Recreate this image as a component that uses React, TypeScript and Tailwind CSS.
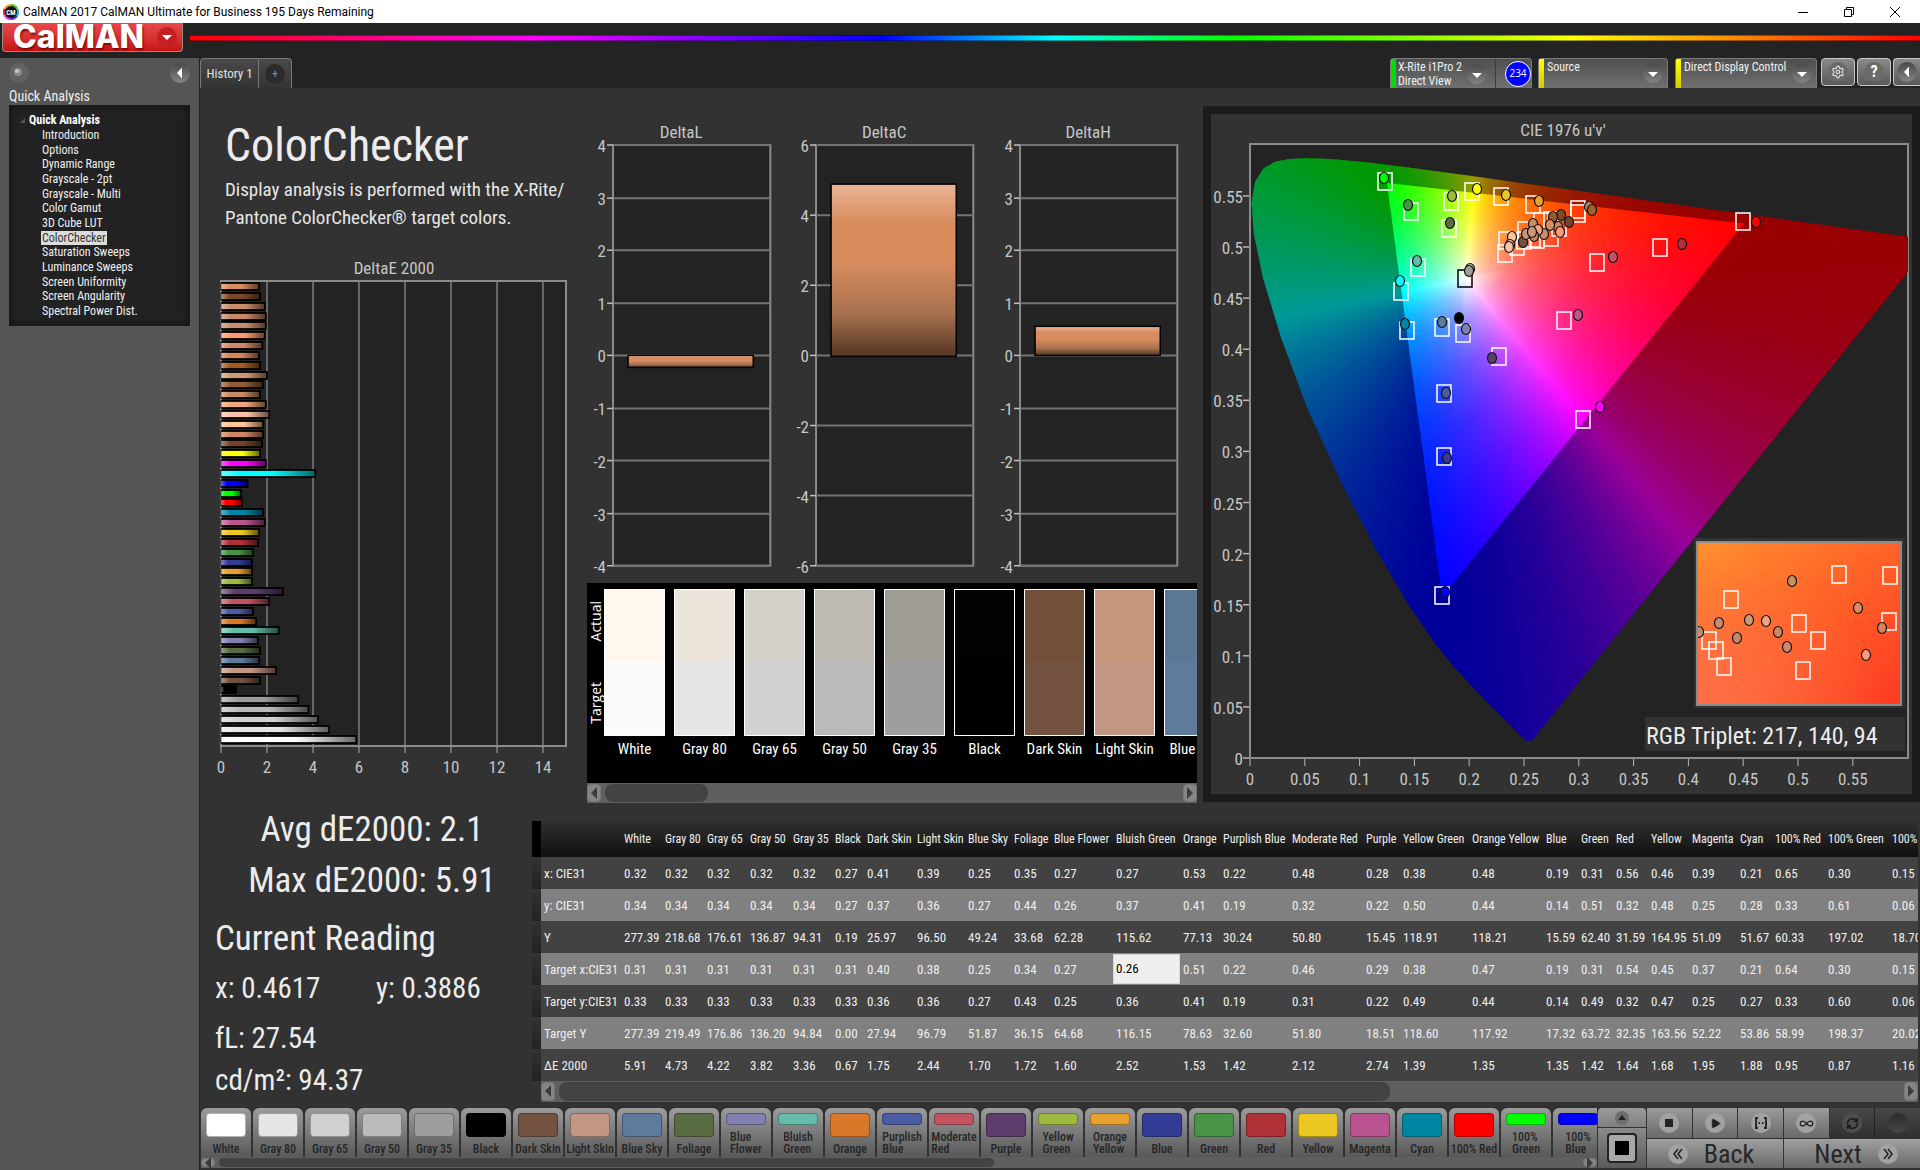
import React, { useState } from 'react';
import { Settings, Play, RefreshCw, Infinity as InfinityIcon } from 'lucide-react';

interface Patch {
  name: string;
  color: string;
  lines?: string[];
}

interface Mark {
  x: number;
  y: number;
  color: string;
}

const menuItems = [
  'Introduction',
  'Options',
  'Dynamic Range',
  'Grayscale - 2pt',
  'Grayscale - Multi',
  'Color Gamut',
  '3D Cube LUT',
  'ColorChecker',
  'Saturation Sweeps',
  'Luminance Sweeps',
  'Screen Uniformity',
  'Screen Angularity',
  'Spectral Power Dist.',
];

const patches: Patch[] = [
  { name: 'White', color: '#ffffff' },
  { name: 'Gray 80', color: '#e6e6e6' },
  { name: 'Gray 65', color: '#d1d1d1' },
  { name: 'Gray 50', color: '#bababa' },
  { name: 'Gray 35', color: '#9e9e9e' },
  { name: 'Black', color: '#000000' },
  { name: 'Dark Skin', color: '#735242' },
  { name: 'Light Skin', color: '#c29682' },
  { name: 'Blue Sky', color: '#5e7a9c' },
  { name: 'Foliage', color: '#596b42' },
  { name: 'Blue Flower', color: '#8280b0', lines: ['Blue', 'Flower'] },
  { name: 'Bluish Green', color: '#63bda8', lines: ['Bluish', 'Green'] },
  { name: 'Orange', color: '#d97829' },
  { name: 'Purplish Blue', color: '#4a5ca3', lines: ['Purplish', 'Blue'] },
  { name: 'Moderate Red', color: '#c25461', lines: ['Moderate', 'Red'] },
  { name: 'Purple', color: '#5c3d6b' },
  { name: 'Yellow Green', color: '#9eba40', lines: ['Yellow', 'Green'] },
  { name: 'Orange Yellow', color: '#e6a12e', lines: ['Orange', 'Yellow'] },
  { name: 'Blue', color: '#333d96' },
  { name: 'Green', color: '#479447' },
  { name: 'Red', color: '#b03038' },
  { name: 'Yellow', color: '#edc721' },
  { name: 'Magenta', color: '#ba5491' },
  { name: 'Cyan', color: '#0085a3' },
  { name: '100% Red', color: '#ff0000' },
  { name: '100% Green', color: '#00ff00', lines: ['100%', 'Green'] },
  { name: '100% Blue', color: '#0000ff', lines: ['100%', 'Blue'] },
];

// Measured colour on top, target colour below
const comparisons = [
  { name: 'White', actual: '#fff8ed', target: '#fafafa' },
  { name: 'Gray 80', actual: '#ece5dc', target: '#e6e6e6' },
  { name: 'Gray 65', actual: '#d5d1ca', target: '#d1d1d1' },
  { name: 'Gray 50', actual: '#beb9b3', target: '#bababa' },
  { name: 'Gray 35', actual: '#a09d95', target: '#9e9e9e' },
  { name: 'Black', actual: '#020204', target: '#000000' },
  { name: 'Dark Skin', actual: '#734f3a', target: '#735242' },
  { name: 'Light Skin', actual: '#c6957a', target: '#c29682' },
  { name: 'Blue Sky', actual: '#5d7894', target: '#5e7a9c' },
];

const columnWidths = [
  80, 41, 42, 43, 43, 42, 32, 50, 51, 46, 40, 62, 67, 40, 69, 74, 37, 69, 74, 35, 35, 35, 41, 48, 35, 53, 64, 60,
];

const tableRows = [
  { label: 'x: CIE31', values: '0.32 0.32 0.32 0.32 0.32 0.27 0.41 0.39 0.25 0.35 0.27 0.27 0.53 0.22 0.48 0.28 0.38 0.48 0.19 0.31 0.56 0.46 0.39 0.21 0.65 0.30 0.15' },
  { label: 'y: CIE31', values: '0.34 0.34 0.34 0.34 0.34 0.27 0.37 0.36 0.27 0.44 0.26 0.37 0.41 0.19 0.32 0.22 0.50 0.44 0.14 0.51 0.32 0.48 0.25 0.28 0.33 0.61 0.06' },
  { label: 'Y', values: '277.39 218.68 176.61 136.87 94.31 0.19 25.97 96.50 49.24 33.68 62.28 115.62 77.13 30.24 50.80 15.45 118.91 118.21 15.59 62.40 31.59 164.95 51.09 51.67 60.33 197.02 18.70' },
  { label: 'Target x:CIE31', values: '0.31 0.31 0.31 0.31 0.31 0.31 0.40 0.38 0.25 0.34 0.27 0.26 0.51 0.22 0.46 0.29 0.38 0.47 0.19 0.31 0.54 0.45 0.37 0.21 0.64 0.30 0.15' },
  { label: 'Target y:CIE31', values: '0.33 0.33 0.33 0.33 0.33 0.33 0.36 0.36 0.27 0.43 0.25 0.36 0.41 0.19 0.31 0.22 0.49 0.44 0.14 0.49 0.32 0.47 0.25 0.27 0.33 0.60 0.06' },
  { label: 'Target Y', values: '277.39 219.49 176.86 136.20 94.84 0.00 27.94 96.79 51.87 36.15 64.68 116.15 78.63 32.60 51.80 18.51 118.60 117.92 17.32 63.72 32.35 163.56 52.22 53.86 58.99 198.37 20.02' },
  { label: 'ΔE 2000', values: '5.91 4.73 4.22 3.82 3.36 0.67 1.75 2.44 1.70 1.72 1.60 2.52 1.53 1.42 2.12 2.74 1.39 1.35 1.35 1.42 1.64 1.68 1.95 1.88 0.95 0.87 1.16' },
];

const deltaE: [string, number][] = [
  ['#d98c5e', 1.65], ['#7a4a26', 1.7], ['#c98d6b', 1.9], ['#c68866', 1.95], ['#c48f6c', 1.95],
  ['#ff9973', 1.9], ['#d18769', 1.8], ['#d58559', 1.65], ['#a35a24', 1.7], ['#cf9874', 2.0],
  ['#935d33', 1.82], ['#c68f60', 1.7], ['#f0a67c', 1.95], ['#f7c2a5', 2.1], ['#fdc596', 1.83],
  ['#cc8863', 1.83], ['#73432b', 1.78], ['#ffff00', 1.7], ['#ff00ff', 1.95], ['#00ffff', 4.1],
  ['#0000ff', 1.16], ['#00ff00', 0.87], ['#ff0000', 0.92], ['#0085a3', 1.83], ['#ba5491', 1.9],
  ['#edc721', 1.66], ['#b03038', 1.62], ['#479447', 1.4], ['#333d96', 1.35], ['#e6a12e', 1.35],
  ['#9eba40', 1.35], ['#5c3d6b', 2.7], ['#c25461', 2.1], ['#4a5ca3', 1.4], ['#d97829', 1.53],
  ['#63bda8', 2.52], ['#8280b0', 1.6], ['#596b42', 1.7], ['#5e7a9c', 1.66], ['#c29682', 2.4],
  ['#735242', 1.7], ['#000000', 0.66], ['#9e9e9e', 3.36], ['#bababa', 3.8], ['#d1d1d1', 4.22],
  ['#e6e6e6', 4.7], ['#ffffff', 5.88],
];

const FONT = "font-['Liberation_Sans_Narrow','Roboto_Condensed','Open_Sans_Condensed','Lato',sans-serif]";

/* ---------- small pieces ---------- */

const ArrowDisc: React.FC<{ dir: 'down' | 'left' }> = ({ dir }) => (
  <svg width="20" height="20" viewBox="0 0 20 20" className="shrink-0" aria-hidden="true">
    <defs>
      <linearGradient id={`disc-${dir}`} x1="0" y1="0" x2="0" y2="1">
        <stop offset="0" stopColor="#484848" />
        <stop offset="1" stopColor="#848484" />
      </linearGradient>
    </defs>
    <circle cx="10" cy="10" r="10" fill={`url(#disc-${dir})`} />
    {dir === 'down' && <path d="M5 9h10l-5 5z" fill="#fff" />}
    {dir === 'left' && <path d="M12 4.500v11l-5-5.500z" fill="#fff" />}
  </svg>
);

const ScrollBar: React.FC<{ label: string; height: string; thumb: string }> = ({ label, height, thumb }) => (
  <div className={`flex items-center gap-1 bg-[#5f5f5f] ${height}`} role="group" aria-label={label}>
    <button aria-label="Scroll left" className="flex h-[calc(100%-2px)] w-3.5 items-center justify-center rounded-sm border border-[#757575] bg-[#858585]">
      <svg width="6" height="12" viewBox="0 0 6 12"><path d="M6 0v12L0 6z" fill="#3b3b3b" /></svg>
    </button>
    <div className="h-[calc(100%-2px)] flex-1">
      <div className={`h-full rounded-lg bg-[#434343] ${thumb}`} />
    </div>
    <button aria-label="Scroll right" className="flex h-[calc(100%-2px)] w-3.5 items-center justify-center rounded-sm border border-[#757575] bg-[#858585]">
      <svg width="6" height="12" viewBox="0 0 6 12"><path d="M0 0v12l6-6z" fill="#3b3b3b" /></svg>
    </button>
  </div>
);

/* ---------- charts ---------- */

const DeltaEChart: React.FC = () => {
  const left = 21;
  const top = 31;
  const bottom = 496;
  const unit = 23;
  return (
    <svg viewBox="0 0 387 535" className="w-full" role="img" aria-label="DeltaE 2000">
      <defs>
        <linearGradient id="barShade" x1="0" y1="0" x2="1" y2="0">
          <stop offset="0" stopColor="#fff" stopOpacity="0.4" />
          <stop offset="0.22" stopColor="#fff" stopOpacity="0" />
          <stop offset="0.55" stopColor="#000" stopOpacity="0" />
          <stop offset="1" stopColor="#000" stopOpacity="0.6" />
        </linearGradient>
      </defs>
      <text x="194" y="24" textAnchor="middle" fontSize="17" fill="#c6c6c6">DeltaE 2000</text>
      <rect x={left} y={top} width={unit * 15} height={bottom - top} fill="#232323" stroke="#8b8b8b" strokeWidth="2" />
      {[0, 2, 4, 6, 8, 10, 12, 14].map((t) => (
        <g key={t}>
          {t > 0 && <line x1={left + t * unit} x2={left + t * unit} y1={top} y2={bottom} stroke="#7f7f7f" strokeWidth="1.500" />}
          <line x1={left + t * unit} x2={left + t * unit} y1={bottom} y2={bottom + 7} stroke="#b0b0b0" />
          <text x={left + t * unit} y={bottom + 27} textAnchor="middle" fontSize="17" fill="#c6c6c6">{t}</text>
        </g>
      ))}
      {deltaE.map(([color, value], i) => {
        const y = Math.round(top + 2 + i * 9.84);
        return (
          <g key={i}>
            <rect x={left} y={y} width={value * unit} height="7" fill={color} stroke="#000" />
            <rect x={left} y={y} width={value * unit} height="7" fill="url(#barShade)" />
            <path d={`M${left} ${y}h${value * unit}v7h-${value * unit}`} fill="none" stroke="#000" strokeWidth="1.500" />
          </g>
        );
      })}
    </svg>
  );
};

const DeltaChart: React.FC<{ title: string; max: number; step: number; value: number }> = ({ title, max, step, value }) => {
  const top = 27;
  const bottom = 447;
  const zero = (top + bottom) / 2;
  const scale = (bottom - top) / (2 * max);
  const ticks: number[] = [];
  for (let t = max; t >= -max; t -= step) ticks.push(t);
  return (
    <svg viewBox="0 0 203 464" className="min-w-0 flex-1 overflow-visible" role="img" aria-label={title}>
      <defs>
        <linearGradient id={`fill-${title}`} x1="0" y1="0" x2="0" y2="1">
          <stop offset="0" stopColor="#e9b597" />
          <stop offset="0.22" stopColor="#d98c5e" />
          <stop offset="0.45" stopColor="#d98c5e" />
          <stop offset="0.75" stopColor="#a8714f" />
          <stop offset="1" stopColor="#533523" />
        </linearGradient>
      </defs>
      <text x="94" y="20" textAnchor="middle" fontSize="17" fill="#c6c6c6">{title}</text>
      <rect x="26" y={top} width="157" height={bottom - top} fill="#232323" stroke="#8b8b8b" strokeWidth="2" />
      {ticks.map((t) => {
        const y = Math.round(zero - t * scale);
        return (
          <g key={t}>
            <line x1="26" x2="183" y1={y} y2={y} stroke="#747474" strokeWidth="2" />
            <line x1="20" x2="26" y1={y} y2={y} stroke="#c0c0c0" strokeWidth="1.500" />
            <text x="19" y={y + 7} textAnchor="end" fontSize="17" fill="#c6c6c6">{t}</text>
          </g>
        );
      })}
      <rect
        x="41"
        y={Math.round(zero - Math.max(value, 0) * scale)}
        width="125"
        height={Math.round(Math.abs(value) * scale)}
        fill={`url(#fill-${title})`}
        stroke="#000"
        strokeWidth="1.500"
      />
    </svg>
  );
};

const ux = (u: number) => 39 + u * 1096;
const vy = (v: number) => 644 - v * 1022;

const WHITE = [0.1978, 0.4683];
const PRIMARIES = [[0.4507, 0.5229], [0.125, 0.5625], [0.1754, 0.1579]];

const LOCUS = [
  [0.2568, 0.0165], [0.2522, 0.0169], [0.2461, 0.0226], [0.2347, 0.035], [0.2161, 0.0549], [0.1877, 0.0871],
  [0.169, 0.1119], [0.1441, 0.151], [0.1147, 0.2044], [0.0828, 0.2708], [0.0521, 0.3427], [0.0282, 0.4117],
  [0.0119, 0.4698], [0.0035, 0.5131], [0.0014, 0.5432], [0.0046, 0.5638], [0.0123, 0.577], [0.0231, 0.5837],
  [0.036, 0.5861], [0.0501, 0.5868], [0.0643, 0.5865], [0.0792, 0.5856], [0.1127, 0.5821], [0.1531, 0.5766],
  [0.2026, 0.5694], [0.2623, 0.5604], [0.3315, 0.5501], [0.4035, 0.5393], [0.4691, 0.5296], [0.5203, 0.5219],
  [0.583, 0.5125], [0.6234, 0.5065],
];

// u'v' -> display RGB, scaled so that the strongest channel is full
const chromaToRgb = (u: number, v: number, dim: number, power: number) => {
  const X = (9 * u) / (4 * v);
  const Z = (12 - 3 * u - 20 * v) / (4 * v);
  const lin = [
    3.2406 * X - 1.5372 - 0.4986 * Z,
    -0.9689 * X + 1.8758 + 0.0415 * Z,
    0.0557 * X - 0.204 + 1.057 * Z,
  ].map((c) => Math.max(c, 0));
  const peak = Math.max(...lin);
  const [r, g, b] = lin.map((c) => Math.round(255 * dim * Math.pow(c / peak, power)));
  return `rgb(${r},${g},${b})`;
};

// Distance along a ray from the white point to the edge of the RGB triangle
const edgeDistance = (dx: number, dy: number) => {
  let best = 10;
  for (let i = 0; i < 3; i++) {
    const [ax, ay] = PRIMARIES[i];
    const [bx, by] = PRIMARIES[(i + 1) % 3];
    const ex = bx - ax;
    const ey = by - ay;
    const det = dx * ey - dy * ex;
    if (Math.abs(det) < 1e-9) continue;
    const t = ((ax - WHITE[0]) * ey - (ay - WHITE[1]) * ex) / det;
    const s = ((ax - WHITE[0]) * dy - (ay - WHITE[1]) * dx) / det;
    if (t > 0 && s >= -0.0001 && s <= 1.0001) best = Math.min(best, t);
  }
  return best;
};

const WEDGES = 240;
const wedges = Array.from({ length: WEDGES }, (_, i) => {
  const a0 = (i / WEDGES) * Math.PI * 2;
  const mid = a0 + Math.PI / WEDGES;
  const a1 = a0 + (Math.PI * 2.6) / WEDGES;
  const dx = Math.cos(mid);
  const dy = Math.sin(mid);
  const d = edgeDistance(dx, dy);
  const at = (a: number) => `${ux(WHITE[0] + Math.cos(a)).toFixed(1)},${vy(WHITE[1] + Math.sin(a)).toFixed(1)}`;
  return {
    points: `${ux(WHITE[0])},${vy(WHITE[1])} ${at(a0)} ${at(a1)}`,
    end: [ux(WHITE[0] + dx * d), vy(WHITE[1] + dy * d)],
    stops: [0, 0.15, 0.3, 0.5, 0.75, 1].map((t) => ({
      t,
      color: chromaToRgb(WHITE[0] + dx * d * t, WHITE[1] + dy * d * t, 1, 1.1),
    })),
    outer: chromaToRgb(WHITE[0] + dx * d, WHITE[1] + dy * d, 0.6, 1.6),
  };
});

const toPoints = (list: number[][]) => list.map(([u, v]) => `${ux(u).toFixed(1)},${vy(v).toFixed(1)}`).join(' ');

const targets = [
  [174, 67], [261, 77], [290, 82], [240, 87], [200, 97], [322, 90], [367, 95], [367, 99], [238, 114], [207, 153],
  [190, 177], [196, 216], [231, 213], [252, 219], [288, 242], [233, 279], [233, 342], [231, 481], [353, 206],
  [372, 305], [386, 148], [449, 133], [532, 107], [294, 139], [295, 126], [306, 132], [313, 126], [314, 116],
  [322, 124], [326, 125], [340, 123], [340, 106], [330, 107], [348, 113],
];

const readings: Mark[] = [
  { x: 173, y: 64, color: '#00ff00' }, { x: 197, y: 91, color: '#479447' }, { x: 241, y: 82, color: '#9eba40' },
  { x: 266, y: 75, color: '#ffff00' }, { x: 295, y: 81, color: '#edc721' }, { x: 328, y: 87, color: '#e6a12e' },
  { x: 239, y: 109, color: '#596b42' }, { x: 206, y: 147, color: '#63bda8' }, { x: 189, y: 167, color: '#00ffff' },
  { x: 194, y: 210, color: '#0085a3' }, { x: 231, y: 208, color: '#5e7a9c' }, { x: 248, y: 204, color: '#000000' },
  { x: 255, y: 215, color: '#8280b0' }, { x: 281, y: 244, color: '#5c3d6b' }, { x: 235, y: 279, color: '#4a5ca3' },
  { x: 236, y: 344, color: '#333d96' }, { x: 234, y: 478, color: '#0000ff' }, { x: 367, y: 201, color: '#ba5491' },
  { x: 389, y: 293, color: '#ff00ff' }, { x: 402, y: 143, color: '#c25461' }, { x: 471, y: 130, color: '#b03038' },
  { x: 545, y: 108, color: '#ff0000' }, { x: 259, y: 155, color: '#bababa' }, { x: 258, y: 157, color: '#9e9e9e' },
  { x: 378, y: 93, color: '#b87f4a' }, { x: 381, y: 96, color: '#a3602a' }, { x: 350, y: 101, color: '#7a4a26' },
  { x: 342, y: 103, color: '#935d33' }, { x: 358, y: 108, color: '#73432b' }, { x: 322, y: 110, color: '#c68f60' },
  { x: 347, y: 113, color: '#d58559' }, { x: 339, y: 111, color: '#d98c5e' }, { x: 349, y: 118, color: '#ff9973' },
  { x: 333, y: 120, color: '#c98d6b' }, { x: 327, y: 116, color: '#f0a67c' }, { x: 312, y: 128, color: '#735242' },
  { x: 315, y: 120, color: '#c29682' }, { x: 323, y: 122, color: '#c68866' }, { x: 321, y: 118, color: '#cf9874' },
  { x: 301, y: 123, color: '#fdc596' }, { x: 299, y: 131, color: '#f7c2a5' }, { x: 298, y: 133, color: '#f7c2a5' },
];

const insetTargets = [
  [628, 460], [679, 461], [520, 485], [588, 509], [678, 507], [607, 526], [498, 526], [505, 536], [513, 552], [592, 556],
];

const insetReadings: Mark[] = [
  { x: 581, y: 467, color: '#c68f60' }, { x: 647, y: 494, color: '#d98c5e' }, { x: 671, y: 514, color: '#d58559' },
  { x: 508, y: 509, color: '#c98d6b' }, { x: 538, y: 506, color: '#cf9874' }, { x: 555, y: 507, color: '#f0a67c' },
  { x: 526, y: 524, color: '#c68866' }, { x: 567, y: 518, color: '#cc8863' }, { x: 576, y: 533, color: '#d18769' },
  { x: 655, y: 541, color: '#ff9973' }, { x: 488, y: 518, color: '#c48f6c' },
];

const Target: React.FC<{ x: number; y: number; stroke?: string }> = ({ x, y, stroke = '#fff' }) => (
  <rect x={x - 7} y={y - 8} width="14" height="17" fill="none" stroke={stroke} strokeWidth="1.500" />
);

const Reading: React.FC<Mark> = ({ x, y, color }) => (
  <ellipse cx={x} cy={y} rx="4.500" ry="5.500" fill={color} stroke="#111" strokeWidth="1.200" />
);

const CieChart: React.FC = () => (
  <svg viewBox="0 0 701 680" className="block w-full bg-[#323232]" role="img" aria-label="CIE 1976 u'v' chromaticity">
    <defs>
      {wedges.map((w, i) => (
        <linearGradient key={i} id={`w${i}`} gradientUnits="userSpaceOnUse" x1={ux(WHITE[0])} y1={vy(WHITE[1])} x2={w.end[0]} y2={w.end[1]}>
          {w.stops.map((s) => <stop key={s.t} offset={s.t} stopColor={s.color} />)}
        </linearGradient>
      ))}
      <clipPath id="plot"><rect x="39" y="30" width="658" height="614" /></clipPath>
      <clipPath id="locus"><polygon points={toPoints(LOCUS)} /></clipPath>
      <clipPath id="gamut"><polygon points={toPoints(PRIMARIES)} /></clipPath>
      <clipPath id="inset"><rect x="486" y="428" width="204" height="163" /></clipPath>
      <linearGradient id="insetFill" x1="0" y1="0" x2="1" y2="1">
        <stop offset="0" stopColor="#ff9030" />
        <stop offset="0.5" stopColor="#ff6228" />
        <stop offset="1" stopColor="#ff3a22" />
      </linearGradient>
      <radialGradient id="insetGlow" cx="0" cy="1" r="0.9">
        <stop offset="0" stopColor="#ff7048" />
        <stop offset="1" stopColor="#ff7048" stopOpacity="0" />
      </radialGradient>
    </defs>

    <text x="352" y="22" textAnchor="middle" fontSize="17" fill="#c6c6c6">CIE 1976 u'v'</text>
    <rect x="39" y="30" width="658" height="614" fill="#232323" stroke="#8b8b8b" strokeWidth="2" />

    <g clipPath="url(#plot)">
      <g clipPath="url(#locus)" shapeRendering="crispEdges">
        {wedges.map((w, i) => <polygon key={i} points={w.points} fill={w.outer} />)}
      </g>
      <g clipPath="url(#gamut)" shapeRendering="crispEdges">
        {wedges.map((w, i) => <polygon key={i} points={w.points} fill={`url(#w${i})`} />)}
      </g>
    </g>

    {['0', '0.05', '0.1', '0.15', '0.2', '0.25', '0.3', '0.35', '0.4', '0.45', '0.5', '0.55'].map((t) => (
      <g key={t} stroke="#b8b8b8">
        <line x1={ux(+t)} x2={ux(+t)} y1="645" y2="652" />
        <line x1="32" x2="38" y1={vy(+t)} y2={vy(+t)} strokeWidth="1.500" />
        <text x={ux(+t)} y="671" textAnchor="middle" fontSize="17" fill="#c6c6c6" stroke="none">{t}</text>
        <text x="32" y={vy(+t) + 7} textAnchor="end" fontSize="17" fill="#c6c6c6" stroke="none">{t}</text>
      </g>
    ))}

    {targets.map(([x, y], i) => <Target key={i} x={x} y={y} />)}
    <Target x={254} y={164} stroke="#000" />
    {readings.map((m, i) => <Reading key={i} {...m} />)}

    {/* magnified view around the current reading */}
    <rect x="483" y="424" width="211" height="170" fill="#323232" />
    <g clipPath="url(#inset)">
      <rect x="486" y="428" width="204" height="163" fill="url(#insetFill)" />
      <rect x="486" y="428" width="204" height="163" fill="url(#insetGlow)" />
      {insetTargets.map(([x, y], i) => <Target key={i} x={x} y={y} />)}
      {insetReadings.map((m, i) => <Reading key={i} {...m} />)}
    </g>
    <rect x="486" y="428" width="204" height="163" fill="none" stroke="#8b8b8b" strokeWidth="2" />

    <rect x="434" y="603" width="260" height="34" fill="#323232" />
    <text x="435" y="630" fontSize="24" fill="#ececec">RGB Triplet: 217, 140, 94</text>
  </svg>
);

/* ---------- page regions ---------- */

const TitleBar: React.FC = () => (
  <div className="flex h-[23px] items-center bg-white pl-[3px] text-black">
    <svg width="16" height="16" viewBox="0 0 16 16" aria-hidden="true">
      <path d="M8 0a8 8 0 0 1 7 4L8 8z" fill="#4cc03a" />
      <path d="M15 4a8 8 0 0 1 0 8L8 8z" fill="#28b4e0" />
      <path d="M15 12a8 8 0 0 1-7 4V8z" fill="#3a3ae0" />
      <path d="M8 16a8 8 0 0 1-7-4l7-4z" fill="#d02ad0" />
      <path d="M1 12a8 8 0 0 1 0-8l7 4z" fill="#e02a3a" />
      <path d="M1 4a8 8 0 0 1 7-4v8z" fill="#f0b020" />
      <circle cx="8" cy="8" r="6" fill="#111" />
      <text x="8" y="10.500" textAnchor="middle" fontSize="7" fontWeight="bold" fill="#fff">CM</text>
    </svg>
    <span className="ml-1 font-['Roboto',sans-serif] text-[12px]">CalMAN 2017 CalMAN Ultimate for Business 195 Days Remaining</span>
    <div className="mr-0.5 ml-auto flex">
      <button aria-label="Minimize" className="flex w-[46px] justify-center">
        <svg width="12" height="12" viewBox="0 0 12 12"><path d="M1 6.500h10" stroke="#000" /></svg>
      </button>
      <button aria-label="Restore" className="flex w-[46px] justify-center">
        <svg width="12" height="12" viewBox="0 0 12 12" fill="none" stroke="#000"><path d="M1.500 3.500h7v7h-7zM3.500 3.500v-2h7v7h-2" /></svg>
      </button>
      <button aria-label="Close" className="flex w-[46px] justify-center">
        <svg width="12" height="12" viewBox="0 0 12 12"><path d="M1 1l10 10M11 1L1 11" stroke="#000" /></svg>
      </button>
    </div>
  </div>
);

const Header: React.FC = () => (
  <header className="flex h-[35px] items-start bg-[#232323] pl-0.5">
    <button className="flex h-[29px] w-[181px] items-center rounded-b border-x border-b border-[#9b8a8a] bg-linear-to-b from-[#e8484a] to-[#c81214] pl-2.5">
      <span className="w-[144px] text-left font-['Inter',sans-serif] text-[32px] leading-[26px] font-extrabold text-white [text-shadow:1px_2px_2px_#7a0a0a]">CalMAN</span>
      <svg width="20" height="20" viewBox="0 0 20 20" aria-hidden="true">
        <circle cx="10" cy="10" r="10" fill="#c42023" />
        <path d="M5 8h10l-5 5z" fill="#fff" />
      </svg>
    </button>
    <div className="mt-3 ml-[7px] h-1.5 flex-1 border-y border-black/40 [background-image:linear-gradient(to_right,#f00,#f0f_20%,#00f_40%,#0ff_50%,#0f0_60%,#ff0_80%,#f00)]" />
  </header>
);

const Sidebar: React.FC<{ active: string; onSelect: (name: string) => void }> = ({ active, onSelect }) => (
  <aside className="w-[199px] shrink-0 bg-[#555555] px-[9px] text-[#f0f0f0]">
    <div className="flex h-[30px] items-center justify-between">
      <svg width="20" height="20" viewBox="0 0 20 20" aria-hidden="true">
        <circle cx="10" cy="10" r="10" fill="#626262" />
        <circle cx="9" cy="9" r="4" fill="#8c8c8c" />
        <circle cx="8" cy="8" r="2" fill="#c4c4c4" />
      </svg>
      <button aria-label="Collapse panel"><ArrowDisc dir="left" /></button>
    </div>
    <h2 className="h-[17px] text-[14px] leading-[17px]">Quick Analysis</h2>
    <nav className="flex h-[221px] flex-col border border-[#1a1a1a] bg-[#222222] pt-1.5 pl-[18px] text-[12px] shadow-[inset_0_0_8px_#111]">
      <div className="flex h-4 items-center leading-[16px] font-bold text-white">
        <svg width="5" height="5" viewBox="0 0 5 5" aria-hidden="true" className="mr-1 -ml-2"><path d="M5 0v5H0z" fill="#555" /></svg>
        Quick Analysis
      </div>
      <ul className="flex h-[190px] flex-col justify-between pl-[13px]">
        {menuItems.map((item) => (
          <li key={item} className="flex h-[14px]">
            <button
              onClick={() => onSelect(item)}
              className={`px-px leading-[14px] ${item === active ? 'bg-[#dcdcdc] text-[#333]' : ''}`}
            >
              {item}
            </button>
          </li>
        ))}
      </ul>
    </nav>
  </aside>
);

const DeviceSelect: React.FC<{ label: string; width: string }> = ({ label, width }) => (
  <div className={`relative flex h-[30px] rounded-t border-x border-t border-[#7a7a7a] bg-linear-to-b from-[#4f4f4f] to-[#707070] ${width}`}>
    <span className="w-[5px] shrink-0 bg-linear-to-b from-[#ffff00] to-[#d8c800]" />
    <select aria-label={label} className="block h-4 flex-1 appearance-none bg-transparent pl-[3px] text-[12px] leading-[14px] text-[#f0f0f0]">
      <option>{label}</option>
    </select>
    <span className="pointer-events-none absolute top-1 right-1"><ArrowDisc dir="down" /></span>
  </div>
);

const TopBar: React.FC = () => (
  <div className="flex h-[30px] items-start bg-[#232323]">
    <div className="flex h-[30px] rounded-t border-x border-t border-[#777] bg-linear-to-b from-[#4a4a4a] to-[#333]">
      <button className="w-[57px] pt-px text-[13px] text-[#e0e0e0]">History 1</button>
      <button aria-label="Add history" className="flex w-[33px] items-center justify-center border-l border-[#777]">
        <span className="flex size-5 items-center justify-center rounded-full bg-[#2b2b2b] text-[12px] text-[#888]">+</span>
      </button>
    </div>
    <div className="ml-auto flex">
      <div className="mr-1.5 flex h-[30px] w-[142px] items-center rounded-t border-x border-t border-[#7a7a7a] bg-linear-to-b from-[#4f4f4f] to-[#707070]">
        <button className="flex h-full flex-1 items-center border-l-[5px] border-[#00e000] pl-0.5 text-left text-[12px] leading-[14px] whitespace-nowrap text-[#f0f0f0]">
          <span className="flex-1">X-Rite i1Pro 2<br />Direct View</span>
          <ArrowDisc dir="down" />
        </button>
        <div className="ml-2 flex h-full w-[36px] items-center justify-end border-l border-[#3c3c3c]">
          <span className="flex size-[26px] items-center justify-center rounded-full border border-white bg-[#0000ff] font-['Open_Sans',sans-serif] text-[10px] text-white">234</span>
        </div>
      </div>
      <div className="mr-[7px]"><DeviceSelect label="Source" width="w-[130px]" /></div>
      <div className="mr-1"><DeviceSelect label="Direct Display Control" width="w-[142px]" /></div>
      <div className="flex gap-0.5 text-white">
        <button aria-label="Settings" className="flex h-[28px] w-[34px] items-center justify-center rounded border border-[#c8c8c8] bg-linear-to-b from-[#8a8a8a] to-[#5a5a5a]">
          <span className="flex size-5 items-center justify-center rounded-full bg-[#6a6a6a]"><Settings size={14} color="#ddd" /></span>
        </button>
        <button aria-label="Help" className="flex h-[28px] w-[34px] items-center justify-center rounded border border-[#c8c8c8] bg-linear-to-b from-[#8a8a8a] to-[#5a5a5a]">
          <span className="flex size-5 items-center justify-center rounded-full bg-[#6a6a6a] text-[16px] font-bold">?</span>
        </button>
        <button aria-label="Hide devices" className="flex h-[28px] w-[27px] items-center justify-center rounded-l border-y border-l border-[#c8c8c8] bg-linear-to-b from-[#8a8a8a] to-[#5a5a5a]">
          <ArrowDisc dir="left" />
        </button>
      </div>
    </div>
  </div>
);

const SwatchStrip: React.FC = () => (
  <div>
    <div className="flex h-[200px] overflow-hidden bg-black pt-1.5 text-white">
      <div className="flex h-[147px] w-[17px] shrink-0 flex-col items-center justify-between py-3 font-['Open_Sans',sans-serif] text-[14px] leading-[16px]">
        <span className="rotate-180 [writing-mode:vertical-rl]">Actual</span>
        <span className="rotate-180 [writing-mode:vertical-rl]">Target</span>
      </div>
      {comparisons.map((c) => (
        <div key={c.name} className="mr-[9px] flex w-[61px] shrink-0 flex-col items-center">
          <div className="flex h-[147px] w-full flex-col border border-white">
            <div className="flex-1" style={{ background: c.actual }} />
            <div className="flex-1" style={{ background: c.target }} />
          </div>
          <span className="mt-1 text-[15px] leading-[18px] whitespace-nowrap">{c.name}</span>
        </div>
      ))}
    </div>
    <ScrollBar label="Swatch scroll" height="h-5" thumb="w-[18%]" />
  </div>
);

const Readings: React.FC = () => (
  <section className="w-[332px] shrink-0 pt-px text-[29px] text-[#ececec]">
    <div className="pl-3 text-center text-[35px]">
      <div className="h-[51px] leading-[51px]">Avg dE2000: 2.1</div>
      <div className="h-[51px] leading-[51px]">Max dE2000: 5.91</div>
    </div>
    <div className="pl-[15px]">
      <h2 className="h-[66px] text-[35px] leading-[66px]">Current Reading</h2>
      <div className="flex h-8 leading-8">
        <span className="w-[161px]">x: 0.4617</span>
        <span>y: 0.3886</span>
      </div>
      <div className="mt-4 h-9 leading-9">fL: 27.54</div>
      <div className="h-12 leading-[48px]">cd/m²: 94.37</div>
    </div>
  </section>
);

const DataTable: React.FC = () => {
  const [edited, setEdited] = useState('0.26');
  return (
    <section className="min-w-0 flex-1 overflow-hidden pt-[18px] pr-0.5">
      <div className="overflow-hidden">
        <table className="w-[1417px] table-fixed border-collapse text-left text-[13px] text-[#efefef]">
          <colgroup>
            <col className="w-[9px]" />
            {columnWidths.map((w, i) => <col key={i} style={{ width: w }} />)}
          </colgroup>
          <thead>
            <tr className="h-9 bg-linear-to-b from-[#303030] via-[#202020] to-[#101010] text-[12px]">
              <th className="bg-black" />
              <th />
              {patches.map((p) => (
                <th key={p.name} scope="col" className="p-0 pl-[3px] font-normal whitespace-nowrap">{p.name}</th>
              ))}
            </tr>
          </thead>
          <tbody>
            {tableRows.map((row, r) => (
              <tr key={row.label} className={r % 2 ? 'h-8 bg-[#808080]' : 'h-8 bg-[#424242]'}>
                <td className="bg-linear-to-b from-[#333] to-[#222] p-0" />
                <th scope="row" className="p-0 pt-0.5 pl-[3px] font-normal whitespace-nowrap">{row.label}</th>
                {row.values.split(' ').map((v, c) => (
                  r === 3 && c === 11 ? (
                    <td key={c} className="p-0">
                      <input
                        aria-label="Target x, Bluish Green"
                        value={edited}
                        onChange={(e) => setEdited(e.target.value)}
                        className="block h-[30px] w-full border border-[#d8d8d8] bg-[#efefef] pl-0.5 text-black"
                      />
                    </td>
                  ) : (
                    <td key={c} className="p-0 pt-0.5 pl-[3px]">{v}</td>
                  )
                ))}
              </tr>
            ))}
          </tbody>
        </table>
      </div>
      <div className="pl-[9px]"><ScrollBar label="Table scroll" height="h-[21px]" thumb="w-[62%]" /></div>
    </section>
  );
};

const transportButton = 'flex flex-1 items-center justify-center border-r border-[#333] bg-linear-to-b from-[#9a9a9a] to-[#6a6a6a]';
const disc = 'flex size-5 items-center justify-center rounded-full bg-[#a2a2a2] text-[#222]';

const BottomBar: React.FC = () => (
  <footer className="flex h-[62px] bg-[#323232] pb-0.5 pl-px text-[#262626]">
    <div className="min-w-0 flex-1 overflow-hidden">
      <div className="flex h-[49px] gap-0.5">
        {patches.map((p) => (
          <button
            key={p.name}
            className="flex w-[50px] shrink-0 flex-col items-center justify-between rounded-t-md bg-linear-to-b from-[#9c9c9c] to-[#595959] pt-[5px] pb-0.5 text-[12px] leading-3 font-medium whitespace-nowrap"
          >
            <span
              className={`w-10 rounded border border-black/30 ${p.lines ? 'h-3' : 'h-6'}`}
              style={{ background: p.color }}
            />
            <span className="text-left">
              {(p.lines ?? [p.name]).map((line) => <span key={line} className="block">{line}</span>)}
            </span>
          </button>
        ))}
      </div>
      <ScrollBar label="Patch scroll" height="h-[11px]" thumb="w-[57%]" />
    </div>
    <div className="mx-px flex w-[48px] flex-col gap-px">
      <button aria-label="Expand" className="flex h-[19px] items-center justify-center rounded-t bg-linear-to-b from-[#9a9a9a] to-[#808080]">
        <svg width="14" height="14" viewBox="0 0 14 14"><circle cx="7" cy="7" r="7" fill="#6e6e6e" /><path d="M3 9h8L7 4z" fill="#222" /></svg>
      </button>
      <button aria-label="Stop pattern" className="flex flex-1 items-center justify-center bg-linear-to-b from-[#8a8a8a] to-[#5a5a5a]">
        <span className="flex size-[30px] items-center justify-center rounded border-2 border-[#222] bg-[#a8a8a8]">
          <span className="size-3.5 bg-black" />
        </span>
      </button>
    </div>
    <div className="flex w-[273px] flex-col gap-px">
      <div className="flex h-[30px]">
        <button aria-label="Stop" className={transportButton}><span className={disc}><span className="size-2 bg-[#222]" /></span></button>
        <button aria-label="Play" className={transportButton}><span className={disc}><Play size={11} fill="#222" /></span></button>
        <button aria-label="Read range" className={transportButton}>
          <span className={disc}>
            <svg width="14" height="12" viewBox="0 0 14 12" fill="none" stroke="#222" strokeWidth="1.800"><path d="M4 1H2v10h2M10 1h2v10h-2M4.500 6h1.500M8 6h1.500" /></svg>
          </span>
        </button>
        <button aria-label="Read continuously" className={transportButton}><span className={disc}><InfinityIcon size={15} /></span></button>
        <button aria-label="Refresh" disabled className="flex flex-1 items-center justify-center border-r border-[#222] bg-linear-to-b from-[#484848] to-[#303030]">
          <span className="flex size-5 items-center justify-center rounded-full bg-[#4e4e4e] text-[#1a1a1a]"><RefreshCw size={13} strokeWidth={3} /></span>
        </button>
        <button aria-label="Record" disabled className="flex flex-1 items-center justify-center bg-linear-to-b from-[#484848] to-[#303030]">
          <span className="size-5 rounded-full bg-linear-to-b from-[#2c2c2c] to-[#484848]" />
        </button>
      </div>
      <div className="flex flex-1 text-[26px] leading-7">
        <button className="flex flex-1 items-center justify-center gap-4 border-r border-[#333] bg-linear-to-b from-[#a0a0a0] to-[#6a6a6a] pr-2">
          <span className={disc}>
            <svg width="10" height="12" viewBox="0 0 10 12" fill="none" stroke="#222" strokeWidth="1.500"><path d="M5 1L1 6l4 5M9 1L5 6l4 5" /></svg>
          </span>
          Back
        </button>
        <button className="flex flex-1 items-center justify-center gap-4 bg-linear-to-b from-[#a0a0a0] to-[#6a6a6a] pl-2">
          Next
          <span className={disc}>
            <svg width="10" height="12" viewBox="0 0 10 12" fill="none" stroke="#222" strokeWidth="1.500"><path d="M1 1l4 5-4 5M5 1l4 5-4 5" /></svg>
          </span>
        </button>
      </div>
    </div>
  </footer>
);

const App: React.FC = () => {
  const [page, setPage] = useState('ColorChecker');

  return (
    <div className={`flex min-h-screen flex-col overflow-x-hidden bg-[#232323] ${FONT}`}>
      <TitleBar />
      <Header />
      <div className="flex flex-1">
        <Sidebar active={page} onSelect={setPage} />
        <main className="flex min-w-0 flex-1 flex-col border-l border-[#222] bg-[#323232]">
          <TopBar />
          <div className="flex">
            <section className="w-[387px] shrink-0">
              <h1 className="mt-[27px] pl-[25px] text-[46px] leading-[60px] text-[#ececec]">ColorChecker</h1>
              <p className="mt-px pl-[25px] text-[19px] leading-7 whitespace-nowrap text-[#e6e6e6]">
                Display analysis is performed with the X-Rite/<br />Pantone ColorChecker® target colors.
              </p>
              <div className="mt-[18px]"><DeltaEChart /></div>
            </section>
            <section className="w-[610px] shrink-0 pt-[30px]">
              <div className="flex">
                <DeltaChart title="DeltaL" max={4} step={1} value={-0.22} />
                <DeltaChart title="DeltaC" max={6} step={2} value={4.9} />
                <DeltaChart title="DeltaH" max={4} step={1} value={0.55} />
              </div>
              <SwatchStrip />
            </section>
            <section className="mt-[18px] ml-1.5 min-w-0 flex-1 self-start bg-[#1b1b1b] p-2">
              <CieChart />
            </section>
          </div>
          <div className="flex">
            <Readings />
            <DataTable />
          </div>
          <div className="mt-auto"><BottomBar /></div>
        </main>
      </div>
    </div>
  );
};

export default App;
